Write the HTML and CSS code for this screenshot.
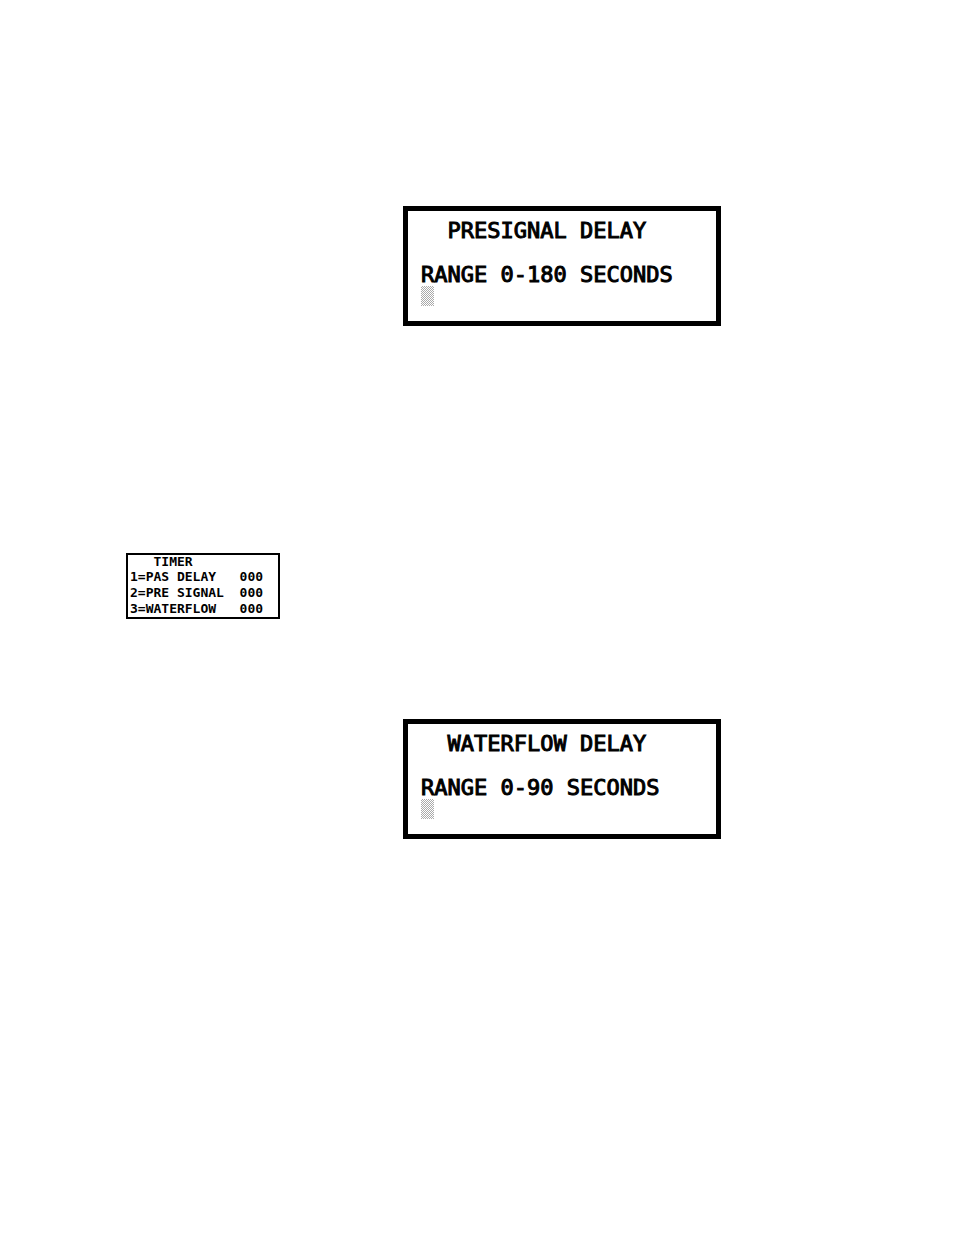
FILE: index.html
```
<!DOCTYPE html>
<html lang="en">
<head>
    <meta charset="UTF-8" />
    <title>Timer Delay Screens</title>
    <link rel="stylesheet" href="styles.css">
</head>
<body>
  <main class="page">
    <section class="lcd">
      <h2 class="lcd-title">  PRESIGNAL DELAY</h2>
      <label for="presignal">RANGE 0-180 SECONDS</label>
      <input type="text" id="presignal" class="cursor" maxlength="3">
    </section>

    <section class="timer">
      <h2 class="timer-title">   TIMER</h2>
      <p>1=PAS DELAY   000</p>
      <p>2=PRE SIGNAL  000</p>
      <p>3=WATERFLOW   000</p>
    </section>

    <section class="lcd">
      <h2 class="lcd-title">  WATERFLOW DELAY</h2>
      <label for="waterflow">RANGE 0-90 SECONDS</label>
      <input type="text" id="waterflow" class="cursor" maxlength="2">
    </section>
  </main>
</body>
</html>
```
FILE: styles.css
```
* {
    margin: 0;
    padding: 0;
    box-sizing: border-box;
}

body {
    background-color: #fff;
    color: #000;
    font-family: "DejaVu Sans Mono", "Liberation Mono", monospace;
}

.page {
    display: flex;
    flex-direction: column;
    align-items: flex-start;
    padding: 206px 126px;
}

/* large display */
.lcd {
    display: flex;
    flex-direction: column;
    align-items: flex-start;
    width: 318px;
    margin-left: 277px;
    padding: 9px 13px 15px;
    border: 5px solid #000;
    font-size: 22px;
    line-height: 22px;
    white-space: pre;
    -webkit-text-stroke: 1px #000;
}

.lcd-title {
    margin-bottom: 22px;
    font-size: 22px;
    font-weight: normal;
}

.cursor {
    width: 13px;
    height: 20px;
    border: none;
    outline: none;
    background: repeating-conic-gradient(#aaa 0 25%, #fff 0 50%) 0 0 / 2px 2px;
}

/* small timer menu */
.timer {
    display: flex;
    flex-direction: column;
    width: 154px;
    margin: 227px 0 100px;
    padding: 0 2px;
    border: 2px solid #000;
    font-size: 13px;
    font-weight: bold;
    line-height: 16px;
    white-space: pre;
}

.timer-title {
    font-size: 13px;
    line-height: 14px;
}
```
